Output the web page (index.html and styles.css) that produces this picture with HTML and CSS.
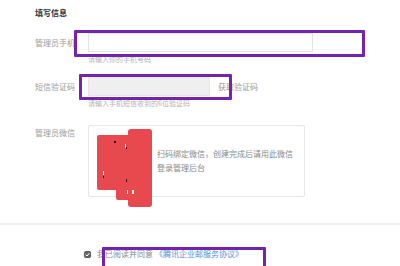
FILE: index.html
```html
<!DOCTYPE html>
<html lang="zh-CN">
<head>
<meta charset="utf-8">
<title>填写信息</title>
<link rel="stylesheet" href="styles.css">
</head>
<body>
<div class="page">
  <div class="form">
    <div class="title">填写信息</div>

    <div class="field field-phone">
      <div class="label">管理员手机</div>
      <div class="input"></div>
    </div>
    <div class="hint">请输入你的手机号码</div>

    <div class="field field-sms">
      <div class="label">短信验证码</div>
      <div class="input input-gray"></div>
      <div class="get-code">获取验证码</div>
    </div>
    <div class="hint">请输入手机短信收到的6位验证码</div>

    <div class="field field-wx">
      <div class="label label-top">管理员微信</div>
      <div class="qr-box">
        <svg class="redact" width="55" height="78" viewBox="0 0 55 78">
          <rect x="0" y="6" width="34" height="55" rx="2" fill="#e8494e"/>
          <rect x="31" y="0" width="24" height="78" rx="3" fill="#e8494e"/>
          <rect x="19" y="48" width="15" height="23" rx="2" fill="#e8494e"/>
          <rect x="17" y="12" width="2" height="2" fill="#2a1010"/>
          <rect x="28" y="15" width="1" height="4" fill="#fff"/>
          <rect x="29" y="18" width="1" height="2" fill="#3a1010"/>
          <rect x="6" y="42" width="1" height="4" fill="#fff"/>
          <rect x="6" y="47" width="1" height="2" fill="#3a1010"/>
          <rect x="29" y="50" width="1" height="3" fill="#3a1010"/>
          <rect x="30" y="61" width="1" height="4" fill="#fff"/>
          <rect x="35" y="61" width="2" height="4" fill="#fff"/>
        </svg>
        <div class="qr-text">扫码绑定微信，创建完成后请用此微信<br>登录管理后台</div>
      </div>
    </div>
  </div>

  <div class="divider"></div>

  <div class="agree">
    <svg class="check" width="7" height="7" viewBox="0 0 7 7">
      <rect x="0.5" y="0.5" width="6" height="6" rx="1" fill="#666" stroke="#555"/>
      <path d="M1.6 3.6 L3 5 L5.5 2" fill="none" stroke="#fff" stroke-width="1"/>
    </svg>
    <span class="agree-text">我已阅读并同意</span><span class="link">《腾讯企业邮服务协议》</span>
  </div>

  <div class="mark mark-phone"></div>
  <div class="mark mark-sms"></div>
  <div class="mark mark-agree"></div>
</div>
</body>
</html>
```

FILE: styles.css
```css
html, body {
  margin: 0;
  padding: 0;
  background: #fff;
}

body {
  font-family: "Noto Sans CJK SC", "Noto Sans", sans-serif;
  font-size: 8px;
  color: #9a9a9a;
}

.page {
  position: relative;
  width: 400px;
  height: 266px;
  overflow: hidden;
}

.form {
  padding: 8px 0 0 35px;
}

.title {
  line-height: 10px;
  height: 10px;
  color: #333;
  font-weight: bold;
}

.field {
  display: flex;
  align-items: center;
}

.label {
  width: 53px;
  flex: none;
  line-height: 19px;
  white-space: nowrap;
}

.input {
  box-sizing: border-box;
  height: 19px;
  border: 1px solid #e4e4e4;
  background: #fff;
}

.field-phone {
  margin-top: 15px;
}

.field-phone .input {
  width: 225px;
}

.field-sms {
  margin-top: 13px;
}

.input-gray {
  width: 122px;
  background: #efefef;
  border-color: #e6e6e6;
}

.get-code {
  margin-left: 8px;
  color: #9a9a9a;
}

.hint {
  margin: 3px 0 0 53px;
  font-size: 7px;
  line-height: 9px;
  color: #b3b3b3;
}

.field-wx {
  margin-top: 17px;
  align-items: flex-start;
}

.label-top {
  line-height: 16px;
}

.qr-box {
  position: relative;
  box-sizing: border-box;
  width: 217px;
  height: 72px;
  border: 1px solid #e6e6e6;
  border-radius: 2px;
  display: flex;
  align-items: center;
  padding-left: 68px;
}

.redact {
  position: absolute;
  left: 8px;
  top: 3px;
}

.qr-text {
  line-height: 14px;
  color: #888;
  white-space: nowrap;
}

.divider {
  margin-top: 26px;
  height: 2px;
  background: #f0f0f0;
}

.agree {
  margin-top: 24px;
  padding-left: 84px;
  display: flex;
  align-items: center;
  line-height: 10px;
  color: #8a8a8a;
}

.check {
  flex: none;
  margin-right: 6px;
}

.link {
  color: #5a8fd8;
  margin-left: 2px;
}

.mark {
  position: absolute;
  box-sizing: border-box;
  border: 3.5px solid #7424ac;
  border-radius: 1px;
}

.mark-phone {
  left: 74px;
  top: 30px;
  width: 291px;
  height: 27px;
}

.mark-sms {
  left: 79px;
  top: 74px;
  width: 153px;
  height: 26px;
}

.mark-agree {
  left: 102px;
  top: 247px;
  width: 164px;
  height: 30px;
}
```
